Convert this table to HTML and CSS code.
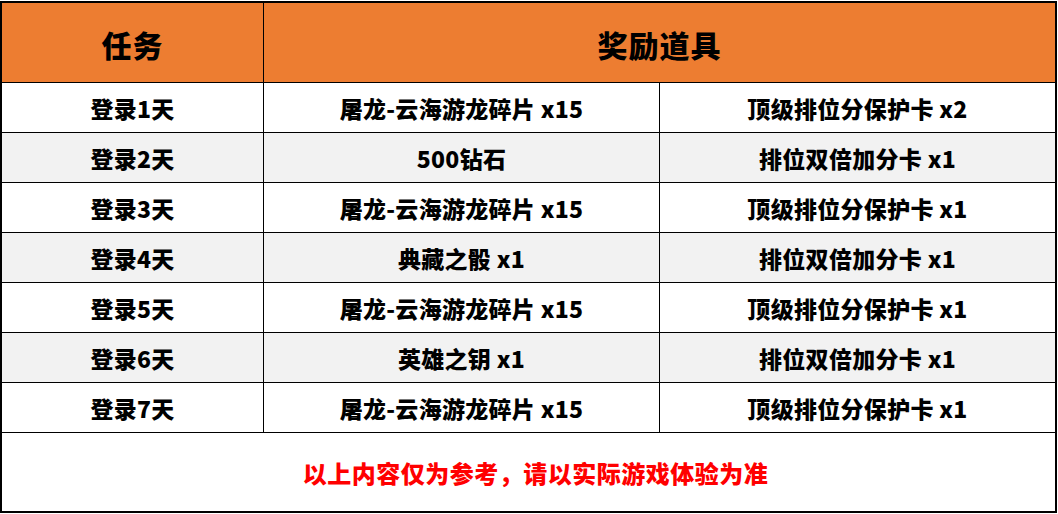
FILE: index.html
```html
<!DOCTYPE html>
<html lang="zh-CN">
<head>
<meta charset="utf-8">
<title>奖励道具</title>
<link rel="stylesheet" href="styles.css">
</head>
<body>
<div class="table">
  <div class="cell head c1">任务</div>
  <div class="cell head span2">奖励道具</div>

  <div class="cell c1">登录1天</div>
  <div class="cell c2">屠龙-云海游龙碎片 x15</div>
  <div class="cell c3">顶级排位分保护卡 x2</div>

  <div class="cell c1 alt">登录2天</div>
  <div class="cell c2 alt">500钻石</div>
  <div class="cell c3 alt">排位双倍加分卡 x1</div>

  <div class="cell c1">登录3天</div>
  <div class="cell c2">屠龙-云海游龙碎片 x15</div>
  <div class="cell c3">顶级排位分保护卡 x1</div>

  <div class="cell c1 alt">登录4天</div>
  <div class="cell c2 alt">典藏之骰 x1</div>
  <div class="cell c3 alt">排位双倍加分卡 x1</div>

  <div class="cell c1">登录5天</div>
  <div class="cell c2">屠龙-云海游龙碎片 x15</div>
  <div class="cell c3">顶级排位分保护卡 x1</div>

  <div class="cell c1 alt">登录6天</div>
  <div class="cell c2 alt">英雄之钥 x1</div>
  <div class="cell c3 alt">排位双倍加分卡 x1</div>

  <div class="cell c1">登录7天</div>
  <div class="cell c2">屠龙-云海游龙碎片 x15</div>
  <div class="cell c3">顶级排位分保护卡 x1</div>

  <div class="footer">以上内容仅为参考，请以实际游戏体验为准</div>
</div>
</body>
</html>
```

FILE: styles.css
```css
html, body {
  margin: 0;
  padding: 0;
  background: #ffffff;
}

body {
  font-family: "Noto Sans CJK SC", "Noto Sans", sans-serif;
  color: #000;
}

.table {
  box-sizing: border-box;
  width: 1057px;
  margin-top: 1px;
  border: 2px solid #000;
  display: grid;
  grid-template-columns: 262px 396px 395px;
  grid-template-rows: 80px repeat(7, 50px) 78px;
}

.cell {
  box-sizing: border-box;
  display: flex;
  align-items: center;
  justify-content: center;
  border-bottom: 1px solid #000;
  font-size: 23px;
  font-weight: 900;
  letter-spacing: 0.3px;
  background: #ffffff;
  white-space: nowrap;
}

.c1, .c2 {
  border-right: 1px solid #000;
}

.alt {
  background: #f2f2f2;
}

.head {
  background: #ed7d31;
  font-size: 30px;
  letter-spacing: 1px;
  padding-top: 2px;
}

.span2 {
  grid-column: span 2;
}

.footer {
  grid-column: 1 / -1;
  display: flex;
  align-items: center;
  justify-content: center;
  color: #ff0000;
  font-size: 24px;
  font-weight: 900;
  letter-spacing: 0.5px;
  padding-left: 14px;
}
```
